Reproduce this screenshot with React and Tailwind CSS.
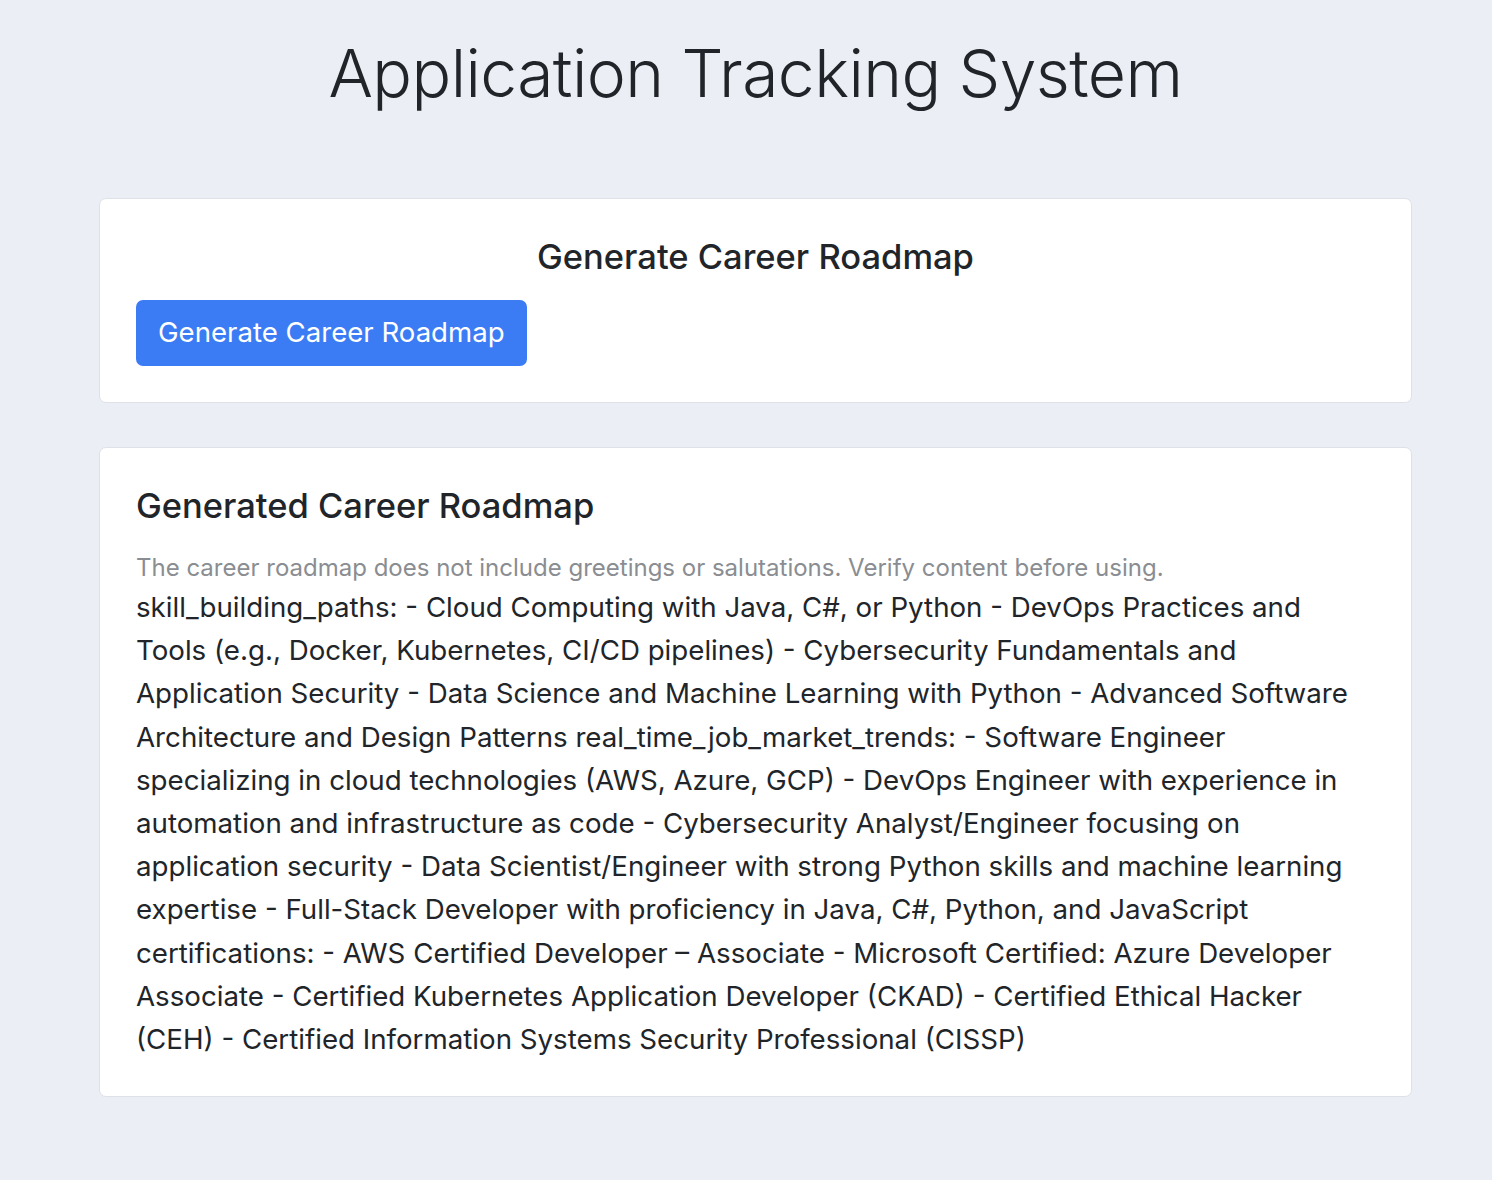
export default function App() {
  const roadmap =
    'skill_building_paths: - Cloud Computing with Java, C#, or Python - DevOps Practices and Tools (e.g., Docker, Kubernetes, CI/CD pipelines) - Cybersecurity Fundamentals and Application Security - Data Science and Machine Learning with Python - Advanced Software Architecture and Design Patterns real_time_job_market_trends: - Software Engineer specializing in cloud technologies (AWS, Azure, GCP) - DevOps Engineer with experience in automation and infrastructure as code - Cybersecurity Analyst/Engineer focusing on application security - Data Scientist/Engineer with strong Python skills and machine learning expertise - Full-Stack Developer with proficiency in Java, C#, Python, and JavaScript certifications: - AWS Certified Developer – Associate - Microsoft Certified: Azure Developer Associate - Certified Kubernetes Application Developer (CKAD) - Certified Ethical Hacker (CEH) - Certified Information Systems Security Professional (CISSP)';

  return (
    <div className="min-h-[1180px] bg-[#eceef5] font-['Inter',sans-serif] text-[#212529]">
      <div className="pl-[99px] w-[1412px]">
        <h1 className="pt-[28px] text-center text-[66px] font-light leading-[90px] tracking-[-0.6px]">
          Application Tracking System
        </h1>

        {/* Generate card */}
        <div className="mt-[80px] bg-white border border-[#dee2e6] rounded-[7px] px-[36px] pt-[36px] pb-[36px]">
          <h3 className="text-center text-[34.5px] font-medium leading-[44px]">Generate Career Roadmap</h3>
          <button className="mt-[21px] h-[66px] px-[22px] bg-[#3b7cf5] text-white text-[27.6px] rounded-[7px]">
            Generate Career Roadmap
          </button>
        </div>

        {/* Result card */}
        <div className="mt-[44px] bg-white border border-[#dee2e6] rounded-[7px] px-[36px] pt-[36px] pb-[35px]">
          <h4 className="text-[34.5px] font-medium leading-[44px]">Generated Career Roadmap</h4>
          <p className="mt-[22px] text-[24px] leading-[36px] text-[#8a8d91]">
            The career roadmap does not include greetings or salutations. Verify content before using.
          </p>
          <p className="pr-[16px] text-[27.7px] leading-[43.2px]">{roadmap}</p>
        </div>
      </div>
    </div>
  );
}
